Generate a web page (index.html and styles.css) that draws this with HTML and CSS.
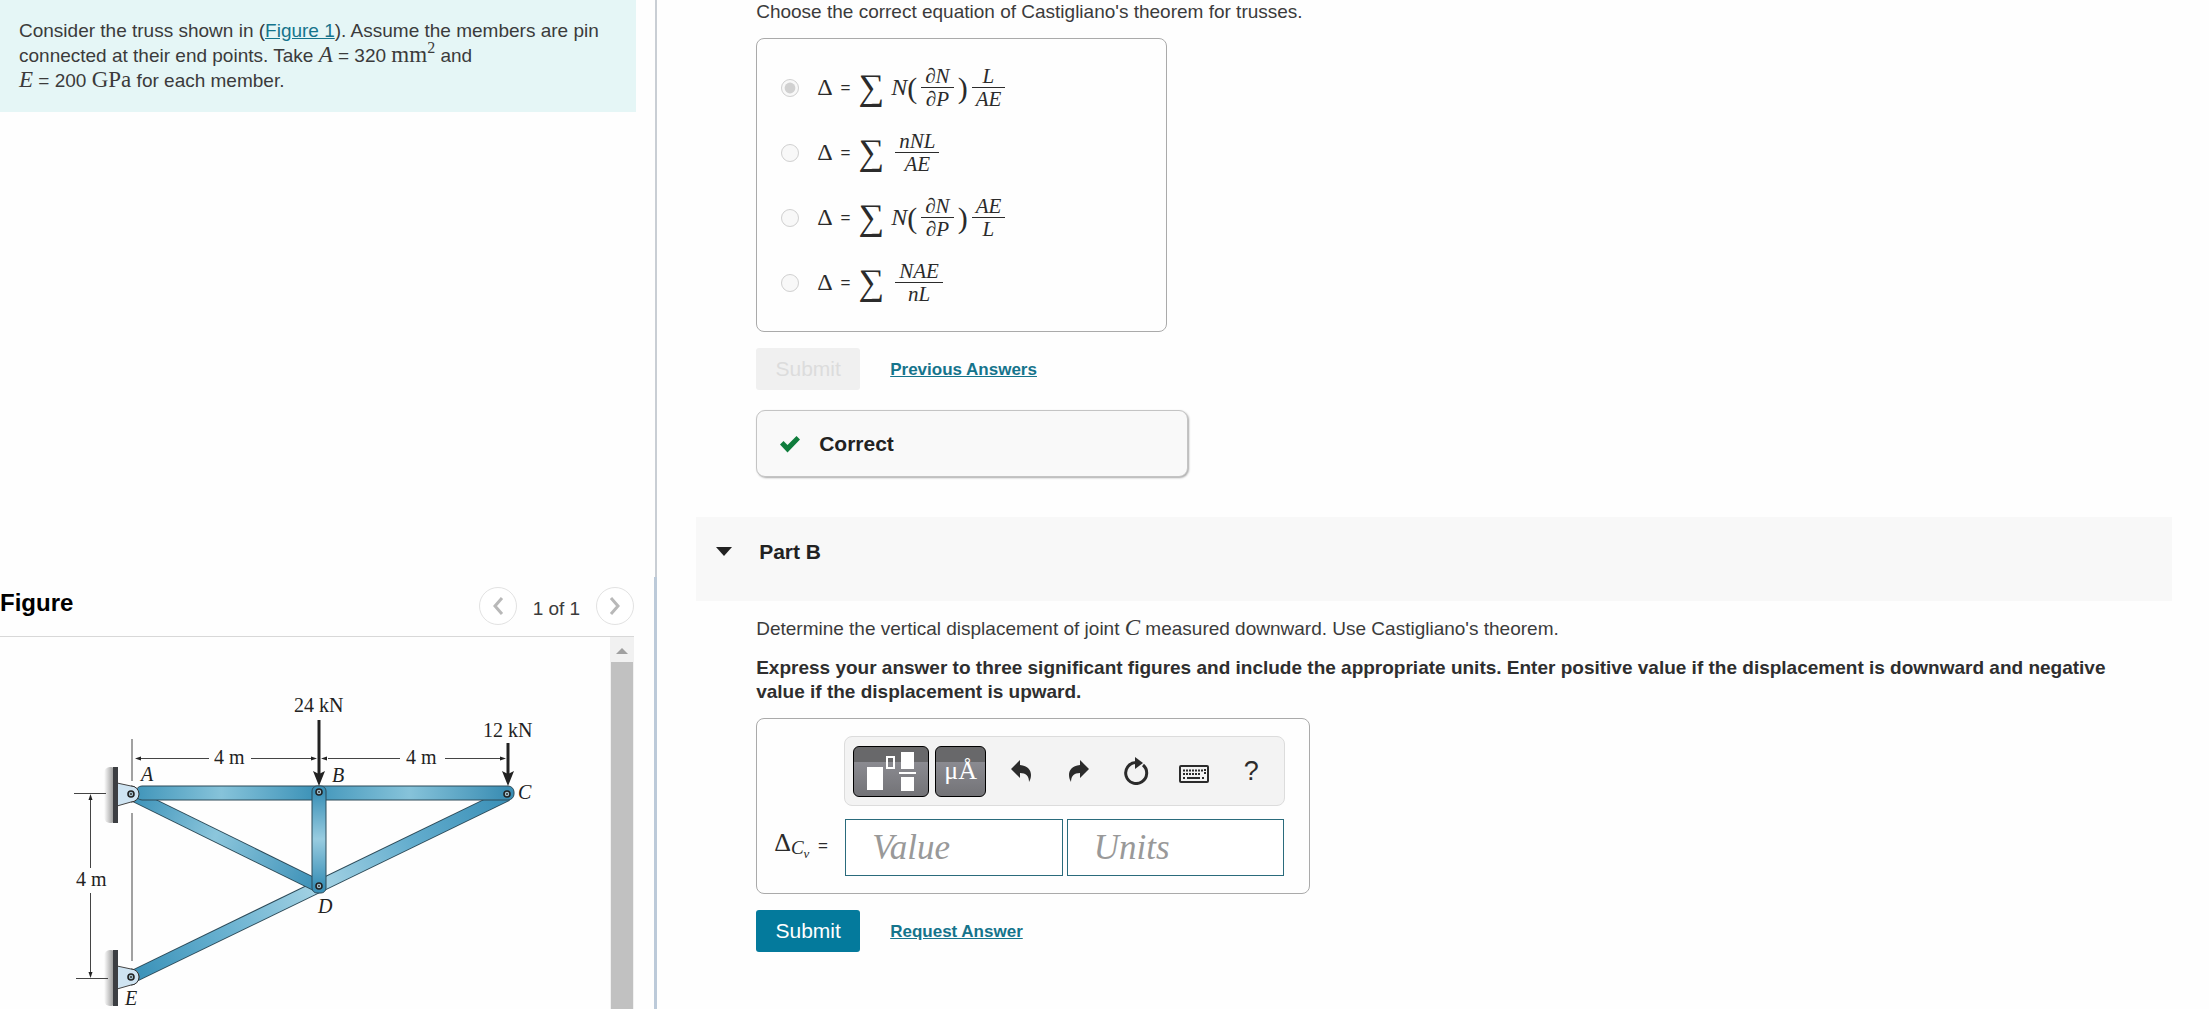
FILE: index.html
```html
<!DOCTYPE html>
<html lang="en">
<head>
    <meta charset="utf-8">
    <title>Castigliano's theorem for trusses</title>
    <link rel="stylesheet" href="styles.css">
</head>
<body>
    <div class="page">
        <aside class="left">
            <section class="problem">
                <p>Consider the truss shown in (<a href="#figure">Figure 1</a>). Assume the members are pin connected at their end points. Take <i class="math">A</i> = 320 <span class="math">mm<sup>2</sup></span> and<br><i class="math">E</i> = 200 <span class="math">GPa</span> for each member.</p>
            </section>

            <section class="figure" id="figure">
                <div class="figure-head">
                    <h2>Figure</h2>
                    <div class="pager">
                        <button type="button" class="round" aria-label="Previous figure">
                            <svg width="12" height="18" viewBox="0 0 12 18"><path d="M10 1 3 9l7 8"/></svg>
                        </button>
                        <span class="count">1 of 1</span>
                        <button type="button" class="round" aria-label="Next figure">
                            <svg width="12" height="18" viewBox="0 0 12 18"><path d="M2 1l7 8-7 8"/></svg>
                        </button>
                    </div>
                </div>
                <div class="figure-view">
                    <div class="drawing">
                        <svg class="truss" width="610" height="380" viewBox="0 637 610 380">
                            <defs>
                                <linearGradient id="beam" gradientUnits="userSpaceOnUse" x1="131" y1="0" x2="507" y2="0">
                                    <stop offset="0" stop-color="#3d93b8"/>
                                    <stop offset=".24" stop-color="#86c3da"/>
                                    <stop offset=".48" stop-color="#3f94b9"/>
                                    <stop offset=".74" stop-color="#86c3da"/>
                                    <stop offset="1" stop-color="#3a8db3"/>
                                </linearGradient>
                                <linearGradient id="post" gradientUnits="userSpaceOnUse" x1="0" y1="792" x2="0" y2="886">
                                    <stop offset="0" stop-color="#3a90b7"/>
                                    <stop offset=".5" stop-color="#98cce0"/>
                                    <stop offset="1" stop-color="#3a90b7"/>
                                </linearGradient>
                                <linearGradient id="diag" gradientUnits="userSpaceOnUse" x1="131" y1="794" x2="319" y2="886">
                                    <stop offset="0" stop-color="#3990b7"/>
                                    <stop offset=".45" stop-color="#8cc6dc"/>
                                    <stop offset="1" stop-color="#3a8fb6"/>
                                </linearGradient>
                                <linearGradient id="long" gradientUnits="userSpaceOnUse" x1="131" y1="977" x2="507" y2="794">
                                    <stop offset="0" stop-color="#3890b7"/>
                                    <stop offset=".25" stop-color="#69b1d0"/>
                                    <stop offset=".5" stop-color="#a5d3e4"/>
                                    <stop offset=".75" stop-color="#62accd"/>
                                    <stop offset="1" stop-color="#3a8fb6"/>
                                </linearGradient>
                                <linearGradient id="shade">
                                    <stop offset="0" stop-color="#fff"/>
                                    <stop offset=".8" stop-color="#8f8f8f"/>
                                </linearGradient>
                                <g id="support">
                                    <rect x="-28" y="-27" width="13" height="56" rx="6" fill="url(#shade)"/>
                                    <path d="M-15-11-1-8A8 8 0 0 1-1 8L-15 12z" fill="#cfe4f2" stroke="#444"/>
                                    <rect x="-19" y="-27" width="5" height="56" fill="#3c3e42"/>
                                </g>
                                <g id="pin">
                                    <circle r="3" fill="#a5c3d0" stroke="#222" stroke-width="1.6"/>
                                    <circle r="1" fill="#333"/>
                                </g>
                                <path id="tip" d="M0 0-6-2V2z"/>
                                <path id="load" d="M0 0-6-15 0-12 6-15z"/>
                            </defs>

                            <!-- members -->
                            <g class="edge">
                                <path d="M134 976 507 795"/>
                            </g>
                            <path d="M134 976 507 795" stroke="url(#long)" stroke-width="11"/>
                            <g class="edge">
                                <path d="M133 795 318 886"/>
                            </g>
                            <path d="M133 795 318 886" stroke="url(#diag)" stroke-width="11"/>
                            <use href="#support" x="132" y="794"/>
                            <use href="#support" x="132" y="977"/>
                            <rect x="136" y="786" width="378" height="14" rx="6" fill="url(#beam)" stroke="#2d4b59"/>
                            <path d="M131 786a8 8 0 0 1 0 16" fill="#cfe4f2" stroke="#333"/>
                            <path d="M131 969a8 8 0 0 1 0 16" fill="#cfe4f2" stroke="#333"/>
                            <rect x="312" y="786" width="14" height="107" rx="5" fill="url(#post)" stroke="#2d4b59"/>
                            <use href="#pin" x="131" y="794"/>
                            <use href="#pin" x="131" y="977"/>
                            <use href="#pin" x="319" y="792"/>
                            <use href="#pin" x="319" y="886"/>
                            <use href="#pin" x="507" y="794"/>

                            <!-- dimension lines -->
                            <path class="dim" d="M132 739v42M132 813v148M138 758.500h71M251 758.500h61M328 758.500h72M445 758.500h57M74 793.500h32M76 978.500h32M90.500 800v68M90.500 893v80"/>
                            <use href="#tip" transform="translate(135 758.500) rotate(180)"/>
                            <use href="#tip" x="317" y="758.500"/>
                            <use href="#tip" transform="translate(321 758.500) rotate(180)"/>
                            <use href="#tip" x="506" y="758.500"/>
                            <use href="#tip" transform="translate(90.500 794) rotate(-90)"/>
                            <use href="#tip" transform="translate(90.500 978) rotate(90)"/>

                            <!-- loads -->
                            <path class="force" d="M319 720v54M508 743v31"/>
                            <use href="#load" x="319" y="786"/>
                            <use href="#load" x="508" y="786"/>

                            <text x="294" y="712">24 kN</text>
                            <text x="483" y="737">12 kN</text>
                            <text x="214" y="764">4 m</text>
                            <text x="406" y="764">4 m</text>
                            <text x="76" y="886">4 m</text>
                            <g font-style="italic">
                                <text x="141" y="781">A</text>
                                <text x="332" y="782">B</text>
                                <text x="518" y="799">C</text>
                                <text x="318" y="913">D</text>
                                <text x="125" y="1005">E</text>
                            </g>
                        </svg>
                    </div>
                    <div class="scrollbar">
                        <span class="scroll-up"></span>
                        <span class="scroll-thumb"></span>
                    </div>
                </div>
            </section>
        </aside>

        <main class="right">
            <section class="part">
                <p>Choose the correct equation of Castigliano's theorem for trusses.</p>
                <form class="choices">
                    <label class="choice">
                        <input type="radio" name="equation" checked disabled>
                        <span class="equation">Δ <b>=</b> <span class="sum">∑</span> <i>N</i><span class="paren">(</span><i class="frac"><span>∂N</span><span>∂P</span></i><span class="paren">)</span><i class="frac"><span>L</span><span>AE</span></i></span>
                    </label>
                    <label class="choice">
                        <input type="radio" name="equation" disabled>
                        <span class="equation">Δ <b>=</b> <span class="sum">∑</span> <i class="frac"><span>nNL</span><span>AE</span></i></span>
                    </label>
                    <label class="choice">
                        <input type="radio" name="equation" disabled>
                        <span class="equation">Δ <b>=</b> <span class="sum">∑</span> <i>N</i><span class="paren">(</span><i class="frac"><span>∂N</span><span>∂P</span></i><span class="paren">)</span><i class="frac"><span>AE</span><span>L</span></i></span>
                    </label>
                    <label class="choice">
                        <input type="radio" name="equation" disabled>
                        <span class="equation">Δ <b>=</b> <span class="sum">∑</span> <i class="frac"><span>NAE</span><span>nL</span></i></span>
                    </label>
                </form>
                <div class="actions">
                    <button type="button" class="submit" disabled>Submit</button>
                    <a href="#previous">Previous Answers</a>
                </div>
                <div class="feedback">
                    <svg width="22" height="18" viewBox="0 0 22 18"><path d="M1 9.500 4.500 6 8.500 10 17.500 1 21 4.500 8.500 17.500z" fill="#107d3d"/></svg>
                    <strong>Correct</strong>
                </div>
            </section>

            <header class="part-head">
                <svg width="16" height="9" viewBox="0 0 16 9"><path d="M0 0h16L8 9z" fill="#222"/></svg>
                <h2>Part B</h2>
            </header>

            <section class="part part-b">
                <p>Determine the vertical displacement of joint <i class="math">C</i> measured downward. Use Castigliano's theorem.</p>
                <p class="instructions">Express your answer to three significant figures and include the appropriate units. Enter positive value if the displacement is downward and negative value if the displacement is upward.</p>
                <form class="answer">
                    <div class="toolbar">
                        <button type="button" class="dark templates" aria-label="Templates">
                            <svg width="52" height="42" viewBox="0 0 52 42">
                                <path d="M2 17h16v23H2zM36 2h13v17H36zM36 27h13v14H36zM34 22h17v2H34z" fill="#fff"/>
                                <path d="M22 7h7v11h-7z" fill="none" stroke="#fff" stroke-width="2"/>
                            </svg>
                        </button>
                        <button type="button" class="dark units">μÅ</button>
                        <button type="button" class="tool" aria-label="Undo">
                            <svg width="22" height="24" viewBox="0 0 22 24"><path d="M1 10 10 1v5c8 1 11 5 11 10 0 3-1 5-2 7 0-6-3-9-9-9v5z"/></svg>
                        </button>
                        <button type="button" class="tool" aria-label="Redo">
                            <svg width="22" height="24" viewBox="0 0 22 24"><path d="M21 10 12 1v5C4 7 1 11 1 16c0 3 1 5 2 7 0-6 3-9 9-9v5z"/></svg>
                        </button>
                        <button type="button" class="tool" aria-label="Reset">
                            <svg width="26" height="28" viewBox="0 0 26 28"><path d="M20 8A10.500 10.500 0 1 1 13 5.500" fill="none" stroke="#2b2b2b" stroke-width="3"/><path d="M12 0l8 6-8 6z"/></svg>
                        </button>
                        <button type="button" class="tool" aria-label="Keyboard shortcuts">
                            <svg width="30" height="24" viewBox="0 -6 30 24">
                                <rect x="1" y="1" width="28" height="16" rx="1" fill="none" stroke="#2b2b2b" stroke-width="2"/>
                                <path d="M4 5.500h20M4 9h18M26 4v6M4 13h3M23 13h3" fill="none" stroke="#2b2b2b" stroke-width="2" stroke-dasharray="2 1"/>
                                <path d="M8 12h13v2H8z"/>
                            </svg>
                        </button>
                        <button type="button" class="tool" aria-label="Help">?</button>
                    </div>
                    <label class="answer-label" for="value">Δ<i class="sub">C<i class="subsub">v</i></i> <b>=</b></label>
                    <div class="fields">
                        <input type="text" id="value" placeholder="Value">
                        <input type="text" aria-label="Units" placeholder="Units">
                    </div>
                </form>
                <div class="actions">
                    <button type="button" class="submit">Submit</button>
                    <a href="#request">Request Answer</a>
                </div>
            </section>
        </main>
    </div>
</body>
</html>
```

FILE: styles.css
```css
* {
    box-sizing: border-box;
}
body {
    margin: 0;
    color: #3b3b3b;
    background: #fefefe;
    font: 19px/25px "Liberation Sans", Arial, sans-serif;
}
h2, p {
    margin: 0;
}
a {
    color: #15748c;
}
button {
    padding: 0;
    font-family: inherit;
}
.page {
    display: grid;
    grid-template-columns: 29.75% 1fr;
    height: 100vh;
    overflow: hidden;
}
.math {
    font-family: "Liberation Serif", "Times New Roman", serif;
    font-size: 23px;
    line-height: 1;
}
.math sup {
    font-size: 16px;
    line-height: 0;
}

/* left side */
.left {
    display: grid;
    grid-template-rows: 4fr 3fr;
    min-height: 0;
}
.problem {
    border-right: 2px solid #c9ced4;
}
.problem p {
    margin-right: 19px;
    padding: 18px 16px 19px 19px;
    background: #e5f6f6;
}
.figure {
    display: flex;
    flex-direction: column;
    min-height: 0;
    padding-right: 20px;
    border-right: 3px solid #bccad9;
}
.figure-head {
    display: flex;
    justify-content: space-between;
    align-items: center;
    height: 60px;
    border-bottom: 1px solid #d8d8d8;
}
.figure-head h2 {
    color: #000;
    font-size: 24px;
    padding-bottom: 8px;
}
.pager {
    display: flex;
    align-items: center;
    gap: 16px;
}
.count {
    padding-top: 4px;
}
.round {
    display: flex;
    align-items: center;
    justify-content: center;
    width: 38px;
    height: 38px;
    border: 1px solid #e2e2e2;
    border-radius: 50%;
    background: #fff;
}
.round path {
    fill: none;
    stroke: #b8b8b8;
    stroke-width: 3;
}
.figure-view {
    display: flex;
    flex: 1;
    min-height: 0;
}
.drawing {
    flex: 1;
    min-width: 0;
    overflow: hidden;
}
.truss {
    display: block;
    font: 20px "Liberation Serif", "Times New Roman", serif;
    fill: #222;
}
.edge path {
    stroke: #2d4b59;
    stroke-width: 13;
}
.dim {
    fill: none;
    stroke: #444;
}
.force {
    stroke: #222;
    stroke-width: 3;
}
.scrollbar {
    display: flex;
    flex-direction: column;
    width: 24px;
    padding: 0 1px;
    background: #f1f1f1;
}
.scroll-up {
    align-self: center;
    margin: 11px 0 8px;
    border: 6px solid transparent;
    border-top: 0;
    border-bottom: 6px solid #a0a0a0;
}
.scroll-thumb {
    flex: 1;
    background: #c1c1c1;
}

/* right side */
.part {
    padding: 0 60px 0 99px;
}
.part p {
    line-height: 23px;
}
.part-b {
    padding-top: 15px;
}
.choices {
    width: 411px;
    margin-top: 15px;
    padding: 16px 24px;
    border: 1px solid #aaa;
    border-radius: 8px;
}
.choice {
    display: flex;
    align-items: center;
    gap: 18px;
    height: 65px;
}
.choice input {
    width: 18px;
    height: 18px;
    margin: 0;
}
.equation {
    display: flex;
    align-items: center;
    color: #2b2b2b;
    font-family: "Liberation Serif", "Times New Roman", serif;
    font-size: 24px;
}
.equation b, .answer-label b {
    margin: 0 8px;
    font: 17px "Liberation Sans", Arial, sans-serif;
}
.sum {
    margin-right: 7px;
    font-size: 36px;
}
.paren {
    font-size: 30px;
}
.frac {
    display: flex;
    flex-direction: column;
    margin: 0 4px;
    font-size: 21px;
    line-height: 22px;
    text-align: center;
}
.frac span {
    padding: 0 4px;
}
.frac span + span {
    border-top: 1px solid #2b2b2b;
}
.actions {
    display: flex;
    align-items: center;
    gap: 30px;
    margin-top: 16px;
    font-size: 17px;
    font-weight: bold;
}
.submit {
    width: 104px;
    height: 42px;
    border: 0;
    border-radius: 3px;
    color: #fff;
    background: #047a9c;
    font-size: 21px;
}
.submit:disabled {
    color: #dcdcdc;
    background: #f0f0f0;
}
.feedback {
    display: flex;
    align-items: center;
    gap: 18px;
    width: 432px;
    height: 67px;
    margin-top: 20px;
    padding-left: 22px;
    border: 1px solid #c4c4c4;
    border-radius: 9px;
    box-shadow: 1px 1px 2px #aaa;
    background: #f9f9f9;
    color: #222;
    font-size: 21px;
}
.part-head {
    display: flex;
    align-items: center;
    gap: 27px;
    height: 84px;
    margin: 40px 37px 0 39px;
    padding: 0 20px 16px;
    background: #f8f8f8;
}
.part-head h2 {
    color: #222;
    font-size: 21px;
}
.part .instructions {
    margin-top: 16px;
    color: #2e2e2e;
    font-weight: bold;
    line-height: 24px;
}
.answer {
    display: grid;
    grid-template-columns: 70px minmax(0, 1fr);
    gap: 13px 0;
    width: 554px;
    margin-top: 14px;
    padding: 17px 24px 17px 17px;
    border: 1px solid #aaa;
    border-radius: 8px;
}
.toolbar {
    display: flex;
    grid-column: 2;
    align-items: center;
    height: 70px;
    padding: 0 4px 0 8px;
    border: 1px solid #dcdcdc;
    border-radius: 8px;
    background: #f3f3f3;
}
.dark {
    height: 51px;
    margin-right: 6px;
    border: 1px solid #000;
    border-radius: 6px;
    color: #fff;
    background: linear-gradient(#68686a 30%, #8b8b91 30%, #737377);
}
.templates {
    width: 76px;
}
.units {
    width: 51px;
    font: 26px "Liberation Serif", "Times New Roman", serif;
}
.tool {
    flex: 1;
    border: 0;
    background: none;
    color: #2b2b2b;
    fill: #2b2b2b;
    font-size: 27px;
}
.tool svg, .templates svg {
    display: block;
    margin: auto;
}
.answer-label {
    align-self: center;
    color: #2b2b2b;
    font-family: "Liberation Serif", "Times New Roman", serif;
    font-size: 26px;
    white-space: nowrap;
}
.answer-label b {
    margin: 0 0 0 2px;
}
.sub {
    font-size: 19px;
    vertical-align: -3px;
}
.subsub {
    font-size: 13px;
    vertical-align: -4px;
}
.fields {
    display: flex;
    gap: 4px;
    padding: 0 1px;
}
.fields input {
    flex: 1;
    min-width: 0;
    height: 57px;
    padding: 0 26px;
    border: 1px solid #2a6b7c;
    background: #fff;
    font: italic 35px "Liberation Serif", "Times New Roman", serif;
}
.fields input::placeholder {
    color: #999;
}
```
